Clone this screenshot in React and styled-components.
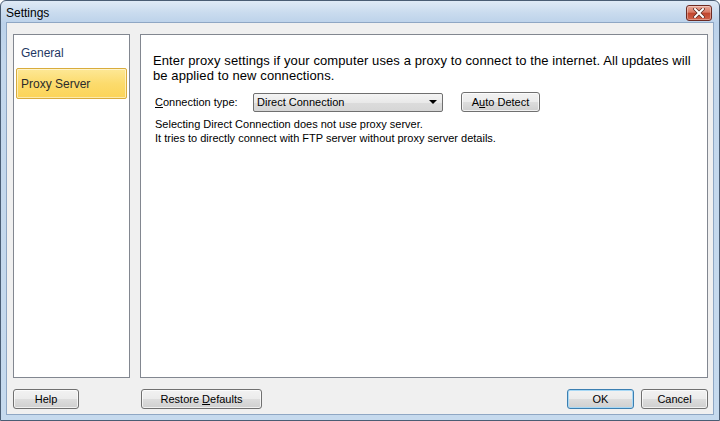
import React from "react";
import styled, { createGlobalStyle } from "styled-components";

const Global = createGlobalStyle`
  html, body { margin: 0; padding: 0; width: 720px; height: 421px; overflow: hidden; }
  body { font-family: "Liberation Sans", Arial, sans-serif; }
  * { box-sizing: border-box; }
`;

const Window = styled.div`
  width: 720px;
  height: 421px;
  border: 1px solid #4a5d74;
  border-radius: 6px 6px 0 0;
  background: linear-gradient(to bottom, #dfeaf6 0px, #c9dbee 12px, #bcd2ea 22px, #c3d7ec 60px, #c6daee 100%);
  display: flex;
  flex-direction: column;
`;

const TitleBar = styled.div`
  height: 21px;
  display: flex;
  align-items: center;
  justify-content: space-between;
  padding: 0 7px 0 5px;
`;

const Title = styled.span`
  font-size: 12px;
  color: #000;
  margin-top: 2px;
`;

const CloseBtn = styled.div`
  width: 26px;
  height: 16px;
  margin-top: 3px;
  border: 1px solid #6d2a22;
  border-radius: 3px;
  background: linear-gradient(to bottom, #e9a99a 0%, #d97963 45%, #c0442c 50%, #d0624a 100%);
  display: flex;
  align-items: center;
  justify-content: center;
  box-shadow: inset 0 0 0 1px rgba(255,255,255,0.35);
`;

const Client = styled.div`
  flex: 1;
  margin: 0 5px 5px 5px;
  border: 1px solid #8fa7c4;
  background: #f0f0f0;
  display: grid;
  grid-template-columns: 117px 1fr;
  grid-template-rows: 344px auto;
  column-gap: 10px;
  row-gap: 11px;
  padding: 11px 5px 0 6px;
`;

const Panel = styled.div`
  border: 1px solid #828790;
  background: #fff;
`;

const Sidebar = styled(Panel)`
  padding: 2px 2px;
  display: flex;
  flex-direction: column;
`;

const NavItem = styled.div`
  height: 31px;
  display: flex;
  align-items: center;
  padding-left: 4px;
  font-size: 12px;
  color: ${p => (p.$active ? "#2b2b2b" : "#1f3763")};
  border: 1px solid ${p => (p.$active ? "#d9ac3c" : "transparent")};
  border-radius: 2px;
  background: ${p => (p.$active ? "linear-gradient(to bottom, #fde896 0%, #fcdb6d 50%, #fbd458 100%)" : "transparent")};
  box-shadow: ${p => (p.$active ? "inset 0 0 0 1px rgba(255,255,255,0.5)" : "none")};
`;

const Main = styled(Panel)`
  padding: 18px 12px 0 12px;
`;

const Intro = styled.p`
  margin: 0;
  font-size: 13px;
  letter-spacing: 0.1px;
  line-height: 15px;
  color: #000;
`;

const Row = styled.div`
  display: flex;
  align-items: center;
  margin-top: 9px;
  padding-left: 2px;
`;

const Label = styled.span`
  font-size: 11px;
  color: #000;
  width: 98px;
`;

const U = styled.span`
  text-decoration: underline;
`;

const Select = styled.div`
  width: 190px;
  height: 19px;
  border: 1px solid #707070;
  border-radius: 2px;
  background: linear-gradient(to bottom, #f4f4f4 0%, #e9e9e9 50%, #dcdcdc 51%, #d6d6d6 100%);
  display: flex;
  align-items: center;
  justify-content: space-between;
  padding: 0 5px 0 3px;
  font-size: 11px;
  color: #000;
`;

const Arrow = styled.span`
  width: 0;
  height: 0;
  border-left: 4px solid transparent;
  border-right: 4px solid transparent;
  border-top: 4px solid #000;
`;

const Button = styled.div`
  width: ${p => p.$w}px;
  height: 20px;
  border: 1px solid ${p => (p.$focus ? "#3c7fb1" : "#707070")};
  border-radius: 3px;
  background: linear-gradient(to bottom, #f2f2f2 0%, #ebebeb 50%, #dddddd 51%, #cfcfcf 100%);
  box-shadow: inset 0 0 0 1px ${p => (p.$focus ? "#a7d8f5" : "rgba(255,255,255,0.7)")};
  display: flex;
  align-items: center;
  justify-content: center;
  font-size: 11px;
  color: #000;
  margin-left: ${p => p.$ml || 0}px;
`;

const Desc = styled.div`
  margin-top: 5px;
  padding-left: 2px;
  font-size: 11px;
  line-height: 14px;
  color: #000;
`;

const Footer = styled.div`
  display: flex;
  align-items: flex-start;
  padding-left: ${p => p.$pl || 0}px;
`;

const Spacer = styled.div`
  flex: 1;
`;

export default function App() {
  return (
    <>
      <Global />
      <Window>
        <TitleBar>
          <Title>Settings</Title>
          <CloseBtn>
            <svg width="12" height="10" viewBox="0 0 12 10">
              <path d="M2 1 L10 9 M10 1 L2 9" stroke="#5a2a22" strokeWidth="3.4" strokeLinecap="square" />
              <path d="M2 1 L10 9 M10 1 L2 9" stroke="#fff" strokeWidth="2" strokeLinecap="square" />
            </svg>
          </CloseBtn>
        </TitleBar>
        <Client>
          <Sidebar>
            <NavItem>General</NavItem>
            <NavItem $active>Proxy Server</NavItem>
          </Sidebar>
          <Main>
            <Intro>
              Enter proxy settings if your computer uses a proxy to connect to the internet. All updates will be applied to new connections.
            </Intro>
            <Row>
              <Label><U>C</U>onnection type:</Label>
              <Select>
                <span>Direct Connection</span>
                <Arrow />
              </Select>
              <Button $w={79} $ml={18}><span>A<U>u</U>to Detect</span></Button>
            </Row>
            <Desc>
              Selecting Direct Connection does not use proxy server.
              <br />
              It tries to directly connect with FTP server without proxy server details.
            </Desc>
          </Main>
          <Footer>
            <Button $w={66}>Help</Button>
          </Footer>
          <Footer $pl={1}>
            <Button $w={121}><span>Restore <U>D</U>efaults</span></Button>
            <Spacer />
            <Button $w={67} $focus>OK</Button>
            <Button $w={67} $ml={7}>Cancel</Button>
          </Footer>
        </Client>
      </Window>
    </>
  );
}
